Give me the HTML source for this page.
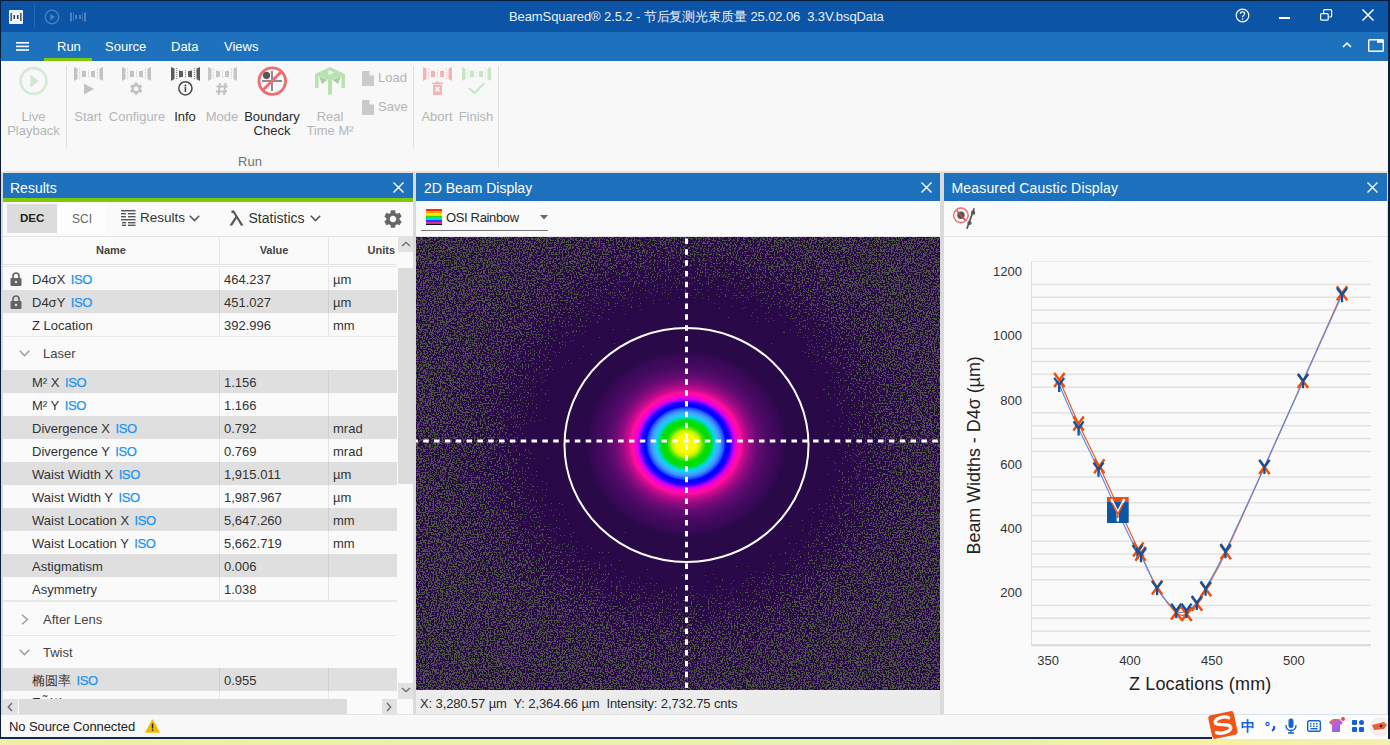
<!DOCTYPE html>
<html><head><meta charset="utf-8">
<style>
*{margin:0;padding:0;box-sizing:border-box}
html,body{width:1390px;height:745px;overflow:hidden;background:#f9f9f9;font-family:"Liberation Sans",sans-serif;position:relative}
.a{position:absolute}
.t{position:absolute;white-space:nowrap;line-height:1}
svg{position:absolute;overflow:visible}
</style></head><body>
<!-- window frame -->
<div class="a" style="left:0;top:0;width:1390px;height:745px;background:#f9f9f9"></div>
<!-- title bar -->
<div class="a" id="titlebar" style="left:0;top:0;width:1390px;height:32px;background:#0c55a6"></div>
<!-- menu bar -->
<div class="a" id="menubar" style="left:0;top:32px;width:1390px;height:29px;background:#1e72bd"></div>
<!-- ribbon -->
<div class="a" id="ribbon" style="left:0;top:61px;width:1390px;height:110px;background:#f8f8f8"></div>
<div class="a" style="left:0;top:171px;width:1390px;height:2px;background:#e6e2de"></div>

<!-- panels area bg -->
<div class="a" style="left:0;top:173px;width:1390px;height:541px;background:#dadada"></div>


<!-- title content -->
<div class="a" style="left:9px;top:10px;width:14px;height:14px;background:#eef4fa;border-radius:1px"></div>
<svg style="left:9px;top:10px" width="14" height="14" viewBox="0 0 14 14">
<rect x="1.5" y="3" width="1.3" height="8" fill="#2a3a50"/>
<rect x="4.5" y="5" width="1.5" height="4" fill="#2a3a50"/>
<rect x="8" y="5" width="1.5" height="4" fill="#2a3a50"/>
<rect x="11.2" y="3" width="1.3" height="8" fill="#2a3a50"/>
</svg>
<div class="a" style="left:34px;top:4px;width:1px;height:24px;background:#2a6ab2"></div>
<svg style="left:44px;top:9px" width="16" height="16" viewBox="0 0 16 16">
<circle cx="8" cy="8" r="6.8" fill="none" stroke="#4a82c0" stroke-width="1.3"/>
<path d="M6.3 4.8 L11 8 L6.3 11.2 Z" fill="#4a82c0"/>
</svg>
<svg style="left:70px;top:11px" width="16" height="12" viewBox="0 0 16 12">
<g fill="#4a82c0"><path d="M0 1 L2 2 L2 10 L0 11Z"/><path d="M14 2 L16 1 L16 11 L14 10Z"/><rect x="5" y="4" width="2" height="4"/><rect x="9" y="4" width="2" height="4"/><rect x="3.3" y="2" width="0.7" height="8"/><rect x="12" y="2" width="0.7" height="8"/></g>
</svg>
<div class="t" style="left:509px;top:10px;font-size:13px;color:#e8f0f8;letter-spacing:-0.1px">BeamSquared® 2.5.2 - 节后复测光束质量 25.02.06&nbsp; 3.3V.bsqData</div>
<!-- help -->
<svg style="left:1235px;top:8px" width="15" height="15" viewBox="0 0 15 15">
<circle cx="7.5" cy="7.5" r="6.3" fill="none" stroke="#fff" stroke-width="1.2"/>
<path d="M5.3 5.8 C5.3 3.2 9.7 3.2 9.7 5.8 C9.7 7.4 7.5 7.4 7.5 9.2" fill="none" stroke="#fff" stroke-width="1.2"/>
<circle cx="7.5" cy="11" r="0.8" fill="#fff"/>
</svg>
<div class="a" style="left:1279px;top:17px;width:11px;height:2px;background:#fff"></div>
<svg style="left:1320px;top:9px" width="13" height="12" viewBox="0 0 13 12">
<rect x="0.6" y="4.6" width="7.6" height="6.6" rx="1" fill="none" stroke="#fff" stroke-width="1.2"/>
<path d="M3.6 4.2 V1.6 A1 1 0 0 1 4.6 0.6 H10.6 A1 1 0 0 1 11.6 1.6 V7 A1 1 0 0 1 10.6 8 H8.6" fill="none" stroke="#fff" stroke-width="1.2"/>
</svg>
<svg style="left:1362px;top:9px" width="12" height="12" viewBox="0 0 12 12">
<path d="M0.5 0.5 L11.5 11.5 M11.5 0.5 L0.5 11.5" stroke="#fff" stroke-width="1.5"/>
</svg>
<!-- menu content -->
<svg style="left:16px;top:42px" width="13" height="9" viewBox="0 0 13 9">
<rect x="0" y="0" width="13" height="1.6" fill="#fff"/><rect x="0" y="3.6" width="13" height="1.6" fill="#fff"/><rect x="0" y="7.2" width="13" height="1.6" fill="#fff"/>
</svg>
<div class="t" style="left:57px;top:40px;font-size:13px;color:#fff">Run</div>
<div class="t" style="left:105px;top:40px;font-size:13px;color:#fff">Source</div>
<div class="t" style="left:171px;top:40px;font-size:13px;color:#fff">Data</div>
<div class="t" style="left:224px;top:40px;font-size:13px;color:#fff">Views</div>
<div class="a" style="left:44px;top:57.5px;width:48px;height:3.5px;background:#80c90a"></div>
<svg style="left:1342px;top:42px" width="10" height="6" viewBox="0 0 10 6">
<path d="M1 5 L5 1.2 L9 5" fill="none" stroke="#fff" stroke-width="1.6"/>
</svg>
<svg style="left:1368px;top:39px" width="16" height="13" viewBox="0 0 16 13">
<rect x="0.7" y="0.7" width="14.6" height="11.6" rx="1" fill="none" stroke="#fff" stroke-width="1.4"/>
<rect x="9" y="0.7" width="6.3" height="3" fill="#fff"/>
</svg>


<!-- ribbon content -->
<svg width="0" height="0" style="position:absolute">
<defs>
<g id="bm">
<path d="M0 0 L3.5 1.5 L3.5 12 L0 14 Z"/>
<path d="M5.3 1 h0.9 v1 h-0.9z M5.3 3 h0.9 v1 h-0.9z M5.3 5 h0.9 v1 h-0.9z M5.3 7 h0.9 v1 h-0.9z M5.3 9 h0.9 v1 h-0.9z M5.3 11 h0.9 v1 h-0.9z"/>
<path d="M8 3.5 L12 4.3 L12 9.7 L8 10.5 Z"/>
<path d="M14 3.3 h0.9 v1 h-0.9z M14 5.3 h0.9 v1 h-0.9z M14 7.3 h0.9 v1 h-0.9z M14 9.3 h0.9 v1 h-0.9z"/>
<path d="M21 3.5 L17 4.3 L17 9.7 L21 10.5 Z"/>
<path d="M22.8 1 h0.9 v1 h-0.9z M22.8 3 h0.9 v1 h-0.9z M22.8 5 h0.9 v1 h-0.9z M22.8 7 h0.9 v1 h-0.9z M22.8 9 h0.9 v1 h-0.9z M22.8 11 h0.9 v1 h-0.9z"/>
<path d="M29 0 L25.5 1.5 L25.5 12 L29 14 Z"/>
</g>
</defs>
</svg>
<!-- Live Playback -->
<svg style="left:19px;top:66px" width="30" height="30" viewBox="0 0 30 30">
<circle cx="14.5" cy="15" r="12.9" fill="none" stroke="#d3ebd3" stroke-width="2.7"/>
<path d="M11.4 8.8 L19.8 15 L11.4 21.5 Z" fill="#cfe8cf"/>
</svg>
<div class="t" style="left:0;width:67px;text-align:center;top:110px;font-size:13px;color:#b5b5b5">Live</div>
<div class="t" style="left:0;width:67px;text-align:center;top:124px;font-size:13px;color:#b5b5b5">Playback</div>
<div class="a" style="left:66px;top:66px;width:1px;height:82px;background:#dedede"></div>
<!-- Start -->
<svg style="left:74px;top:67px" width="30" height="30" viewBox="0 0 30 30"><use href="#bm" fill="#c2c2c2"/>
<path d="M10 16.5 L20 22 L10 27.5 Z" fill="#c2c2c2"/></svg>
<div class="t" style="left:58px;width:60px;text-align:center;top:110px;font-size:13px;color:#b5b5b5">Start</div>
<!-- Configure -->
<svg style="left:122px;top:67px" width="30" height="30" viewBox="0 0 30 30"><use href="#bm" fill="#c2c2c2"/>
<g transform="translate(6.5,14) scale(0.64)"><path fill="#c2c2c2" d="M19.14 12.94c.04-.3.06-.61.06-.94 0-.32-.02-.64-.07-.94l2.03-1.58c.18-.14.23-.41.12-.61l-1.92-3.32c-.12-.22-.37-.29-.59-.22l-2.39.96c-.5-.38-1.03-.7-1.62-.94l-.36-2.54c-.04-.24-.24-.41-.48-.41h-3.840c-.24 0-.43.17-.47.41l-.36 2.54c-.59.24-1.130.57-1.62.94l-2.39-.96c-.22-.08-.47 0-.59.22L2.74 8.87c-.12.21-.08.47.12.61l2.03 1.58c-.05.3-.09.63-.09.94s.02.64.07.94l-2.03 1.58c-.18.14-.23.41-.12.61l1.920 3.32c.12.22.37.29.59.22l2.39-.96c.5.38 1.03.7 1.62.94l.36 2.54c.05.24.24.41.48.41h3.84c.24 0 .44-.17.47-.41l.36-2.54c.59-.24 1.13-.56 1.62-.94l2.39.96c.22.08.47 0 .59-.22l1.92-3.32c.12-.22.07-.47-.12-.61l-2.01-1.58zM12 15.6c-1.98 0-3.6-1.620-3.6-3.6s1.62-3.6 3.6-3.6 3.6 1.62 3.6 3.6-1.62 3.6-3.6 3.6z"/></g></svg>
<div class="t" style="left:106px;width:62px;text-align:center;top:110px;font-size:13px;color:#b5b5b5">Configure</div>
<!-- Info -->
<svg style="left:171px;top:67px" width="30" height="30" viewBox="0 0 30 30"><use href="#bm" fill="#5a5a5a"/>
<circle cx="14.4" cy="21.3" r="6.6" fill="none" stroke="#4a4a4a" stroke-width="1.5"/>
<circle cx="14.4" cy="18.5" r="1" fill="#4a4a4a"/><rect x="13.6" y="20" width="1.6" height="5" fill="#4a4a4a"/></svg>
<div class="t" style="left:155px;width:60px;text-align:center;top:110px;font-size:13px;color:#2a2a2a">Info</div>
<!-- Mode -->
<svg style="left:208px;top:67px" width="30" height="30" viewBox="0 0 30 30"><use href="#bm" fill="#c6c6c6"/>
<path d="M12 16 L10.5 28 M17.5 16 L16 28 M8.5 19.5 H19.5 M8 24.5 H19" stroke="#c2c2c2" stroke-width="2"/></svg>
<div class="t" style="left:192px;width:60px;text-align:center;top:110px;font-size:13px;color:#b5b5b5">Mode</div>
<!-- Boundary Check -->
<svg style="left:256px;top:65px" width="32" height="32" viewBox="0 0 32 32">
<path d="M6 16 H26 M16 6 V26" stroke="#6a6a6a" stroke-width="1.5"/>
<circle cx="10.5" cy="10.3" r="3.6" fill="#555"/>
<path d="M25.5 6.5 L6.8 25.2" stroke="#ef6b70" stroke-width="3"/>
<circle cx="16.3" cy="16.1" r="13.3" fill="none" stroke="#ef6b70" stroke-width="2.8"/>
</svg>
<div class="t" style="left:232px;width:80px;text-align:center;top:110px;font-size:13px;color:#2a2a2a">Boundary</div>
<div class="t" style="left:232px;width:80px;text-align:center;top:124px;font-size:13px;color:#2a2a2a">Check</div>
<!-- Real Time M2 -->
<svg style="left:315px;top:67px" width="30" height="28" viewBox="0 0 30 28">
<g fill="#b9e2b1">
<path d="M0 7 L15 0 L30 7 L30 21 L26.5 21 L26.5 9 L17 12.5 L17 27.5 L13 27.5 L13 12.5 L3.5 9 L3.5 21 L0 21 Z"/>
</g>
<path d="M4 9.5 L12.5 12.8 L7 17 Z M26 9.5 L17.5 12.8 L23 17 Z" fill="#a9cfa3"/>
<path d="M13.5 3 L19 5.5 L13.5 8 Z" fill="#eef7ec"/>
</svg>
<div class="t" style="left:300px;width:60px;text-align:center;top:110px;font-size:13px;color:#b5b5b5">Real</div>
<div class="t" style="left:295px;width:70px;text-align:center;top:124px;font-size:13px;color:#b5b5b5">Time M²</div>
<!-- Load / Save -->
<svg style="left:362px;top:71px" width="12" height="15" viewBox="0 0 12 15"><path d="M1 0 H7.5 L12 4.5 V14 A1 1 0 0 1 11 15 H1 A1 1 0 0 1 0 14 V1 A1 1 0 0 1 1 0Z" fill="#cacaca"/><path d="M7.5 0 V4.5 H12" fill="#f8f8f8"/></svg>
<div class="t" style="left:378px;top:71px;font-size:13px;color:#b5b5b5">Load</div>
<svg style="left:362px;top:100px" width="12" height="15" viewBox="0 0 12 15"><path d="M1 0 H7.5 L12 4.5 V14 A1 1 0 0 1 11 15 H1 A1 1 0 0 1 0 14 V1 A1 1 0 0 1 1 0Z" fill="#cacaca"/><path d="M7.5 0 V4.5 H12" fill="#f8f8f8"/></svg>
<div class="t" style="left:378px;top:100px;font-size:13px;color:#b5b5b5">Save</div>
<div class="a" style="left:413px;top:66px;width:1px;height:82px;background:#dedede"></div>
<!-- Abort -->
<svg style="left:423px;top:67px" width="30" height="30" viewBox="0 0 30 30"><use href="#bm" fill="#f4b4b6"/>
<path d="M9 15.5 H20 V17 H9Z M13 14.5 H16 V15.5 H13Z" fill="#f4b4b6"/><path d="M10 17.5 H19 V27 A1 1 0 0 1 18 28 H11 A1 1 0 0 1 10 27Z" fill="#f4b4b6"/>
<path d="M12.5 20 L16.5 24.5 M16.5 20 L12.5 24.5" stroke="#fff" stroke-width="1.3"/></svg>
<div class="t" style="left:407px;width:60px;text-align:center;top:110px;font-size:13px;color:#b5b5b5">Abort</div>
<!-- Finish -->
<svg style="left:462px;top:67px" width="30" height="30" viewBox="0 0 30 30"><use href="#bm" fill="#c8e6c4"/>
<path d="M7 21 L12.5 26 L22.5 16" fill="none" stroke="#c8e6c4" stroke-width="2.2"/></svg>
<div class="t" style="left:446px;width:60px;text-align:center;top:110px;font-size:13px;color:#b5b5b5">Finish</div>
<div class="a" style="left:498px;top:66px;width:1px;height:101px;background:#dedede"></div>
<div class="t" style="left:220px;width:60px;text-align:center;top:155px;font-size:13px;color:#707070">Run</div>

<!-- Results panel -->
<div class="a" id="results" style="left:3px;top:173px;width:410px;height:541px;background:#fafafa"></div>

<!-- Results panel content -->
<div class="a" style="left:3px;top:173px;width:410px;height:25px;background:#1e72bd"></div>
<div class="a" style="left:3px;top:198px;width:410px;height:4px;background:#80c90a"></div>
<div class="t" style="left:10px;top:181px;font-size:14px;color:#fff">Results</div>
<svg style="left:393px;top:182px" width="11" height="11" viewBox="0 0 11 11"><path d="M0.5 0.5 L10.5 10.5 M10.5 0.5 L0.5 10.5" stroke="#fff" stroke-width="1.4"/></svg>
<!-- toolbar -->
<div class="a" style="left:7px;top:204px;width:50px;height:29px;background:#dcdcdc"></div>
<div class="a" style="left:57px;top:204px;width:49px;height:29px;background:#fdfdfd"></div>
<div class="t" style="left:20px;top:213px;font-size:11.5px;font-weight:bold;color:#222">DEC</div>
<div class="t" style="left:72px;top:213px;font-size:12px;color:#666">SCI</div>
<svg style="left:121px;top:210px" width="15" height="16" viewBox="0 0 15 16"><g fill="#555">
<rect x="0" y="0" width="14.5" height="1.4"/>
<rect x="0" y="3" width="5" height="1.4"/><rect x="7" y="3" width="7.5" height="1.4"/>
<rect x="0" y="6" width="5" height="1.4"/><rect x="7" y="6" width="7.5" height="1.4"/>
<rect x="0" y="9" width="14.5" height="1.4"/>
<rect x="1" y="12" width="4" height="1.4"/><rect x="7" y="12" width="7.5" height="1.4"/>
<rect x="1" y="14.6" width="4" height="1.4"/><rect x="7" y="14.6" width="7.5" height="1.4"/>
</g></svg>
<div class="t" style="left:140px;top:211px;font-size:13.5px;color:#333">Results</div>
<svg style="left:189px;top:215px" width="11" height="7" viewBox="0 0 11 7"><path d="M0.8 0.8 L5.5 5.6 L10.2 0.8" fill="none" stroke="#555" stroke-width="1.5"/></svg>
<svg style="left:229px;top:210px" width="15" height="16" viewBox="0 0 15 16"><path d="M2.5 0.6 L5 0.6 L14.5 15.5 L11.8 15.5 L7.8 8.6 L3.2 15.5 L0.5 15.5 L6.4 6.6 L4.2 3 L2.5 3 Z" fill="#555"/></svg>
<div class="t" style="left:248.5px;top:211px;font-size:14px;color:#333">Statistics</div>
<svg style="left:310px;top:215px" width="11" height="7" viewBox="0 0 11 7"><path d="M0.8 0.8 L5.5 5.6 L10.2 0.8" fill="none" stroke="#555" stroke-width="1.5"/></svg>
<svg style="left:382px;top:208px" width="22" height="22" viewBox="0 0 24 24"><path fill="#666" d="M19.14 12.94c.04-.3.06-.61.06-.94 0-.32-.02-.64-.07-.94l2.03-1.58c.18-.14.23-.41.12-.61l-1.92-3.32c-.12-.22-.37-.29-.59-.22l-2.39.96c-.5-.38-1.03-.7-1.62-.94l-.36-2.54c-.04-.24-.24-.41-.48-.41h-3.84c-.24 0-.43.17-.47.41l-.36 2.54c-.59.24-1.13.57-1.62.94l-2.39-.96c-.22-.08-.47 0-.59.22L2.74 8.87c-.12.21-.08.47.12.61l2.03 1.58c-.05.3-.09.63-.09.94s.02.64.07.94l-2.03 1.58c-.18.14-.23.41-.12.61l1.92 3.32c.12.22.37.29.59.22l2.39-.96c.5.38 1.03.7 1.62.94l.36 2.54c.05.24.24.41.48.41h3.84c.24 0 .44-.17.47-.41l.36-2.54c.59-.24 1.13-.56 1.62-.94l2.39.96c.22.08.47 0 .59-.22l1.92-3.32c.12-.22.07-.47-.12-.61l-2.01-1.58zM12 15.6c-1.98 0-3.6-1.62-3.6-3.6s1.62-3.6 3.6-3.6 3.6 1.62 3.6 3.6-1.62 3.6-3.6 3.6z"/></svg>
<div class="a" style="left:3px;top:236px;width:410px;height:1px;background:#e2e2e2"></div>
<!-- table header -->
<div class="a" style="left:219px;top:237px;width:1px;height:27px;background:#e6e6e6"></div>
<div class="a" style="left:328px;top:237px;width:1px;height:27px;background:#e6e6e6"></div>
<div class="t" style="left:3px;width:216px;text-align:center;top:245px;font-size:11px;font-weight:bold;color:#444">Name</div>
<div class="t" style="left:220px;width:108px;text-align:center;top:245px;font-size:11px;font-weight:bold;color:#444">Value</div>
<div class="t" style="left:329px;width:66px;text-align:right;top:245px;font-size:11px;font-weight:bold;color:#444">Units</div>
<div class="a" style="left:3px;top:264px;width:394px;height:1px;background:#e2e2e2"></div>
<div class="a" style="left:3px;top:266px;width:394px;height:1px;background:#e8e8e8"></div>
<!-- scrollbar -->
<div class="a" style="left:398px;top:237px;width:15px;height:15px;background:#e2e2e2"></div>
<svg style="left:401px;top:241px" width="10" height="6" viewBox="0 0 10 6"><path d="M1 5 L5 1.3 L9 5" fill="none" stroke="#666" stroke-width="1.3"/></svg>
<div class="a" style="left:398px;top:268px;width:15px;height:216px;background:#dcdcdc"></div>
<div class="a" style="left:398px;top:683px;width:15px;height:16px;background:#e2e2e2"></div>
<svg style="left:401px;top:687px" width="10" height="6" viewBox="0 0 10 6"><path d="M1 1 L5 4.7 L9 1" fill="none" stroke="#666" stroke-width="1.3"/></svg>
<div class="a" style="left:3px;top:267px;width:394px;height:23px;background:#fafafa"></div>
<div class="a" style="left:219px;top:267px;width:1px;height:23px;background:#e6e6e6"></div>
<div class="a" style="left:328px;top:267px;width:1px;height:23px;background:#e6e6e6"></div>
<svg style="left:10px;top:272px" width="12" height="14" viewBox="0 0 12 14"><path d="M3 6 V4 A3 3 0 0 1 9 4 V6" fill="none" stroke="#646464" stroke-width="1.7"/><rect x="0.5" y="6" width="11" height="8" rx="1" fill="#646464"/><circle cx="6" cy="10" r="1.2" fill="#e8e8e8"/></svg>
<div class="t" style="left:32px;top:273px;font-size:13px;color:#333">D4σX<span style="margin-left:5.5px;color:#2196f0;-webkit-text-stroke:0.25px #2196f0;letter-spacing:-0.4px">ISO</span></div>
<div class="t" style="left:224px;top:273px;font-size:13px;color:#333">464.237</div>
<div class="t" style="left:333px;top:273px;font-size:13px;color:#333">µm</div>
<div class="a" style="left:3px;top:290px;width:394px;height:23px;background:#dfdfdf"></div>
<div class="a" style="left:219px;top:290px;width:1px;height:23px;background:#cfcfcf"></div>
<div class="a" style="left:328px;top:290px;width:1px;height:23px;background:#cfcfcf"></div>
<svg style="left:10px;top:295px" width="12" height="14" viewBox="0 0 12 14"><path d="M3 6 V4 A3 3 0 0 1 9 4 V6" fill="none" stroke="#646464" stroke-width="1.7"/><rect x="0.5" y="6" width="11" height="8" rx="1" fill="#646464"/><circle cx="6" cy="10" r="1.2" fill="#e8e8e8"/></svg>
<div class="t" style="left:32px;top:296px;font-size:13px;color:#333">D4σY<span style="margin-left:5.5px;color:#2196f0;-webkit-text-stroke:0.25px #2196f0;letter-spacing:-0.4px">ISO</span></div>
<div class="t" style="left:224px;top:296px;font-size:13px;color:#333">451.027</div>
<div class="t" style="left:333px;top:296px;font-size:13px;color:#333">µm</div>
<div class="a" style="left:3px;top:313px;width:394px;height:23px;background:#fafafa"></div>
<div class="a" style="left:219px;top:313px;width:1px;height:23px;background:#e6e6e6"></div>
<div class="a" style="left:328px;top:313px;width:1px;height:23px;background:#e6e6e6"></div>
<div class="t" style="left:32px;top:319px;font-size:13px;color:#333">Z Location</div>
<div class="t" style="left:224px;top:319px;font-size:13px;color:#333">392.996</div>
<div class="t" style="left:333px;top:319px;font-size:13px;color:#333">mm</div>
<div class="a" style="left:3px;top:336px;width:394px;height:1px;background:#e8e8e8"></div>
<svg style="left:19px;top:350px" width="11" height="7" viewBox="0 0 11 7"><path d="M0.8 0.8 L5.5 5.8 L10.2 0.8" fill="none" stroke="#999" stroke-width="1.4"/></svg>
<div class="t" style="left:43px;top:347px;font-size:13px;color:#444">Laser</div>
<div class="a" style="left:3px;top:370px;width:394px;height:23px;background:#dfdfdf"></div>
<div class="a" style="left:219px;top:370px;width:1px;height:23px;background:#cfcfcf"></div>
<div class="a" style="left:328px;top:370px;width:1px;height:23px;background:#cfcfcf"></div>
<div class="t" style="left:32px;top:376px;font-size:13px;color:#333">M² X<span style="margin-left:5.5px;color:#2196f0;-webkit-text-stroke:0.25px #2196f0;letter-spacing:-0.4px">ISO</span></div>
<div class="t" style="left:224px;top:376px;font-size:13px;color:#333">1.156</div>
<div class="a" style="left:3px;top:393px;width:394px;height:23px;background:#fafafa"></div>
<div class="a" style="left:219px;top:393px;width:1px;height:23px;background:#e6e6e6"></div>
<div class="a" style="left:328px;top:393px;width:1px;height:23px;background:#e6e6e6"></div>
<div class="t" style="left:32px;top:399px;font-size:13px;color:#333">M² Y<span style="margin-left:5.5px;color:#2196f0;-webkit-text-stroke:0.25px #2196f0;letter-spacing:-0.4px">ISO</span></div>
<div class="t" style="left:224px;top:399px;font-size:13px;color:#333">1.166</div>
<div class="a" style="left:3px;top:416px;width:394px;height:23px;background:#dfdfdf"></div>
<div class="a" style="left:219px;top:416px;width:1px;height:23px;background:#cfcfcf"></div>
<div class="a" style="left:328px;top:416px;width:1px;height:23px;background:#cfcfcf"></div>
<div class="t" style="left:32px;top:422px;font-size:13px;color:#333">Divergence X<span style="margin-left:5.5px;color:#2196f0;-webkit-text-stroke:0.25px #2196f0;letter-spacing:-0.4px">ISO</span></div>
<div class="t" style="left:224px;top:422px;font-size:13px;color:#333">0.792</div>
<div class="t" style="left:333px;top:422px;font-size:13px;color:#333">mrad</div>
<div class="a" style="left:3px;top:439px;width:394px;height:23px;background:#fafafa"></div>
<div class="a" style="left:219px;top:439px;width:1px;height:23px;background:#e6e6e6"></div>
<div class="a" style="left:328px;top:439px;width:1px;height:23px;background:#e6e6e6"></div>
<div class="t" style="left:32px;top:445px;font-size:13px;color:#333">Divergence Y<span style="margin-left:5.5px;color:#2196f0;-webkit-text-stroke:0.25px #2196f0;letter-spacing:-0.4px">ISO</span></div>
<div class="t" style="left:224px;top:445px;font-size:13px;color:#333">0.769</div>
<div class="t" style="left:333px;top:445px;font-size:13px;color:#333">mrad</div>
<div class="a" style="left:3px;top:462px;width:394px;height:23px;background:#dfdfdf"></div>
<div class="a" style="left:219px;top:462px;width:1px;height:23px;background:#cfcfcf"></div>
<div class="a" style="left:328px;top:462px;width:1px;height:23px;background:#cfcfcf"></div>
<div class="t" style="left:32px;top:468px;font-size:13px;color:#333">Waist Width X<span style="margin-left:5.5px;color:#2196f0;-webkit-text-stroke:0.25px #2196f0;letter-spacing:-0.4px">ISO</span></div>
<div class="t" style="left:224px;top:468px;font-size:13px;color:#333">1,915.011</div>
<div class="t" style="left:333px;top:468px;font-size:13px;color:#333">µm</div>
<div class="a" style="left:3px;top:485px;width:394px;height:23px;background:#fafafa"></div>
<div class="a" style="left:219px;top:485px;width:1px;height:23px;background:#e6e6e6"></div>
<div class="a" style="left:328px;top:485px;width:1px;height:23px;background:#e6e6e6"></div>
<div class="t" style="left:32px;top:491px;font-size:13px;color:#333">Waist Width Y<span style="margin-left:5.5px;color:#2196f0;-webkit-text-stroke:0.25px #2196f0;letter-spacing:-0.4px">ISO</span></div>
<div class="t" style="left:224px;top:491px;font-size:13px;color:#333">1,987.967</div>
<div class="t" style="left:333px;top:491px;font-size:13px;color:#333">µm</div>
<div class="a" style="left:3px;top:508px;width:394px;height:23px;background:#dfdfdf"></div>
<div class="a" style="left:219px;top:508px;width:1px;height:23px;background:#cfcfcf"></div>
<div class="a" style="left:328px;top:508px;width:1px;height:23px;background:#cfcfcf"></div>
<div class="t" style="left:32px;top:514px;font-size:13px;color:#333">Waist Location X<span style="margin-left:5.5px;color:#2196f0;-webkit-text-stroke:0.25px #2196f0;letter-spacing:-0.4px">ISO</span></div>
<div class="t" style="left:224px;top:514px;font-size:13px;color:#333">5,647.260</div>
<div class="t" style="left:333px;top:514px;font-size:13px;color:#333">mm</div>
<div class="a" style="left:3px;top:531px;width:394px;height:23px;background:#fafafa"></div>
<div class="a" style="left:219px;top:531px;width:1px;height:23px;background:#e6e6e6"></div>
<div class="a" style="left:328px;top:531px;width:1px;height:23px;background:#e6e6e6"></div>
<div class="t" style="left:32px;top:537px;font-size:13px;color:#333">Waist Location Y<span style="margin-left:5.5px;color:#2196f0;-webkit-text-stroke:0.25px #2196f0;letter-spacing:-0.4px">ISO</span></div>
<div class="t" style="left:224px;top:537px;font-size:13px;color:#333">5,662.719</div>
<div class="t" style="left:333px;top:537px;font-size:13px;color:#333">mm</div>
<div class="a" style="left:3px;top:554px;width:394px;height:23px;background:#dfdfdf"></div>
<div class="a" style="left:219px;top:554px;width:1px;height:23px;background:#cfcfcf"></div>
<div class="a" style="left:328px;top:554px;width:1px;height:23px;background:#cfcfcf"></div>
<div class="t" style="left:32px;top:560px;font-size:13px;color:#333">Astigmatism</div>
<div class="t" style="left:224px;top:560px;font-size:13px;color:#333">0.006</div>
<div class="a" style="left:3px;top:577px;width:394px;height:23px;background:#fafafa"></div>
<div class="a" style="left:219px;top:577px;width:1px;height:23px;background:#e6e6e6"></div>
<div class="a" style="left:328px;top:577px;width:1px;height:23px;background:#e6e6e6"></div>
<div class="t" style="left:32px;top:583px;font-size:13px;color:#333">Asymmetry</div>
<div class="t" style="left:224px;top:583px;font-size:13px;color:#333">1.038</div>
<div class="a" style="left:3px;top:600px;width:394px;height:2px;background:#e8e8e8"></div>
<svg style="left:21px;top:614px" width="8" height="11" viewBox="0 0 8 11"><path d="M1 0.8 L6.5 5.5 L1 10.2" fill="none" stroke="#999" stroke-width="1.4"/></svg>
<div class="t" style="left:43px;top:613px;font-size:13px;color:#444">After Lens</div>
<div class="a" style="left:3px;top:635px;width:394px;height:1px;background:#e8e8e8"></div>
<svg style="left:19px;top:649px" width="11" height="7" viewBox="0 0 11 7"><path d="M0.8 0.8 L5.5 5.8 L10.2 0.8" fill="none" stroke="#999" stroke-width="1.4"/></svg>
<div class="t" style="left:43px;top:646px;font-size:13px;color:#444">Twist</div>
<div class="a" style="left:3px;top:668px;width:394px;height:23px;background:#dfdfdf"></div>
<div class="a" style="left:219px;top:668px;width:1px;height:23px;background:#cfcfcf"></div>
<div class="a" style="left:328px;top:668px;width:1px;height:23px;background:#cfcfcf"></div>
<div class="t" style="left:32px;top:674px;font-size:13px;color:#333">椭圆率<span style="margin-left:5.5px;color:#2196f0;-webkit-text-stroke:0.25px #2196f0;letter-spacing:-0.4px">ISO</span></div>
<div class="t" style="left:224px;top:674px;font-size:13px;color:#333">0.955</div>
<div class="a" style="left:3px;top:691px;width:394px;height:8px;background:#fafafa;overflow:hidden"><div class="t" style="left:29px;top:5px;font-size:13px;color:#333">Ew̃l^iw</div></div>
<div class="a" style="left:219px;top:691px;width:1px;height:8px;background:#e6e6e6"></div>
<div class="a" style="left:328px;top:691px;width:1px;height:8px;background:#e6e6e6"></div>
<!-- h scrollbar -->
<div class="a" style="left:3px;top:699px;width:394px;height:15px;background:#fafafa"></div>
<div class="a" style="left:3px;top:699px;width:15px;height:15px;background:#e2e2e2"></div>
<svg style="left:7px;top:702px" width="6" height="10" viewBox="0 0 6 10"><path d="M5 1 L1.3 5 L5 9" fill="none" stroke="#666" stroke-width="1.3"/></svg>
<div class="a" style="left:19px;top:699px;width:328px;height:15px;background:#dcdcdc"></div>
<div class="a" style="left:382px;top:699px;width:15px;height:15px;background:#e2e2e2"></div>
<svg style="left:386px;top:702px" width="6" height="10" viewBox="0 0 6 10"><path d="M1 1 L4.7 5 L1 9" fill="none" stroke="#666" stroke-width="1.3"/></svg>

<!-- 2D panel -->
<div class="a" id="beam" style="left:416px;top:173px;width:524px;height:541px;background:#fafafa"></div>

<!-- 2D panel content -->
<div class="a" style="left:416px;top:173px;width:524px;height:28px;background:#1e72bd"></div>
<div class="t" style="left:424px;top:181px;font-size:14px;color:#fff">2D Beam Display</div>
<svg style="left:921px;top:182px" width="11" height="11" viewBox="0 0 11 11"><path d="M0.5 0.5 L10.5 10.5 M10.5 0.5 L0.5 10.5" stroke="#fff" stroke-width="1.4"/></svg>
<svg style="left:426px;top:209px" width="16" height="16" viewBox="0 0 16 16">
<rect x="0" y="0" width="16" height="2.3" fill="#ff2a00"/>
<rect x="0" y="2.3" width="16" height="2.2" fill="#ff9a00"/>
<rect x="0" y="4.5" width="16" height="2.2" fill="#ffee00"/>
<rect x="0" y="6.7" width="16" height="2.2" fill="#22dd00"/>
<rect x="0" y="8.9" width="16" height="2.1" fill="#00d8e8"/>
<rect x="0" y="11" width="16" height="2.1" fill="#2040ff"/>
<rect x="0" y="13.1" width="16" height="1.6" fill="#e0208a"/>
<rect x="0" y="14.7" width="16" height="1.3" fill="#111"/>
</svg>
<div class="t" style="left:446px;top:211px;font-size:13px;color:#2a2a2a;letter-spacing:-0.35px">OSI Rainbow</div>
<svg style="left:540px;top:215px" width="8" height="5" viewBox="0 0 8 5"><path d="M0 0 H8 L4 4.5Z" fill="#666"/></svg>
<div class="a" style="left:421px;top:230px;width:127px;height:1px;background:#7a7a7a"></div>
<div class="a" style="left:416px;top:236px;width:524px;height:1px;background:#e4e4e4"></div>
<!-- beam image -->
<svg style="left:416px;top:237px" width="524" height="453" viewBox="0 0 524 453">
<defs>
<filter id="nz" x="0" y="0" width="524" height="453" filterUnits="userSpaceOnUse" color-interpolation-filters="sRGB">
<feTurbulence type="fractalNoise" baseFrequency="0.65" numOctaves="1" seed="3" result="t"/>
<feColorMatrix in="t" type="matrix" values="1 0 0 0 0  0 1 0 0 0  0 0 1 0 0  0 0 0 0 1" result="t2"/>
<feComposite in="t2" in2="SourceGraphic" operator="arithmetic" k1="0" k2="1" k3="1" k4="-1" result="s"/>
<feColorMatrix in="s" type="matrix" values="0 0 0 0 0.30  0 0 0 0 0.318  0 0 0 0 0.275  1 0 0 0 0" result="c"/>
<feComponentTransfer in="c"><feFuncA type="discrete" tableValues="0 1"/></feComponentTransfer>
</filter>
<radialGradient id="nm" cx="270.5" cy="204" r="340" gradientUnits="userSpaceOnUse" gradientTransform="translate(270.5 204) scale(1 0.95) translate(-270.5 -204)">
<stop offset="0" stop-color="rgb(120,120,120)"/>
<stop offset="0.39" stop-color="rgb(182,182,182)"/>
<stop offset="0.5" stop-color="rgb(219,219,219)"/>
<stop offset="0.59" stop-color="rgb(241,241,241)"/>
<stop offset="0.68" stop-color="rgb(248,248,248)"/>
<stop offset="0.79" stop-color="rgb(252,252,252)"/>
<stop offset="1" stop-color="rgb(253,253,253)"/>
</radialGradient>
<radialGradient id="bg" cx="270" cy="206.5" r="100" gradientUnits="userSpaceOnUse" gradientTransform="translate(270 206.5) scale(1 0.93) translate(-270 -206.5)">
<stop offset="0" stop-color="#ffff00"/>
<stop offset="0.10" stop-color="#f8fc00"/>
<stop offset="0.14" stop-color="#c0f400"/>
<stop offset="0.17" stop-color="#50e400"/>
<stop offset="0.20" stop-color="#00e000"/>
<stop offset="0.25" stop-color="#00dc10"/>
<stop offset="0.275" stop-color="#00d8a0"/>
<stop offset="0.295" stop-color="#00d8ff"/>
<stop offset="0.32" stop-color="#40b0ff"/>
<stop offset="0.35" stop-color="#3a90ff"/>
<stop offset="0.38" stop-color="#1a50ff"/>
<stop offset="0.40" stop-color="#0000ff"/>
<stop offset="0.44" stop-color="#1800ff"/>
<stop offset="0.465" stop-color="#9000ff"/>
<stop offset="0.49" stop-color="#e000f0"/>
<stop offset="0.51" stop-color="#ff00c0"/>
<stop offset="0.54" stop-color="#ff10a0"/>
<stop offset="0.58" stop-color="#d00a90"/>
<stop offset="0.64" stop-color="#960a84"/>
<stop offset="0.72" stop-color="#660a74"/>
<stop offset="0.82" stop-color="#480a62"/>
<stop offset="0.95" stop-color="#360856"/>
<stop offset="1.3" stop-color="#2a0948"/>
</radialGradient>
<radialGradient id="bg2" cx="270.5" cy="204" r="130" gradientUnits="userSpaceOnUse">
<stop offset="0" stop-color="#3a0858" stop-opacity="0"/>
<stop offset="0.7" stop-color="#350a55" stop-opacity="1"/>
<stop offset="1" stop-color="#2d0a4a" stop-opacity="1"/>
</radialGradient>
</defs>
<rect width="524" height="453" fill="#2a0948"/>
<rect width="524" height="453" fill="url(#bg)"/>
<rect width="524" height="453" fill="url(#nm)" filter="url(#nz)"/>
<ellipse cx="270.5" cy="208" rx="122" ry="117" fill="none" stroke="#fff" stroke-width="2"/>
<path d="M270.5 0 V453" stroke="#fff" stroke-width="3" stroke-dasharray="5.5 5.33" stroke-dashoffset="9.3"/>
<path d="M0 204 H524" stroke="#fff" stroke-width="3" stroke-dasharray="5.5 5.33" stroke-dashoffset="3.6"/>
</svg>
<div class="a" style="left:416px;top:690px;width:524px;height:24px;background:#ececec"></div>
<div class="t" style="left:420px;top:697px;font-size:13px;color:#2a2a2a;letter-spacing:-0.12px">X: 3,280.57 µm&nbsp; Y: 2,364.66 µm&nbsp; Intensity: 2,732.75 cnts</div>

<!-- caustic panel -->
<div class="a" id="caustic" style="left:944px;top:173px;width:443px;height:541px;background:#fafafa"></div>


<!-- caustic panel content -->
<div class="a" style="left:944px;top:173px;width:443px;height:28px;background:#1e72bd"></div>
<div class="t" style="left:951.5px;top:181px;font-size:14px;color:#fff;letter-spacing:0.17px">Measured Caustic Display</div>
<svg style="left:1367px;top:182px" width="11" height="11" viewBox="0 0 11 11"><path d="M0.5 0.5 L10.5 10.5 M10.5 0.5 L0.5 10.5" stroke="#fff" stroke-width="1.4"/></svg>
<svg style="left:948px;top:202px" width="32" height="32" viewBox="0 0 32 32">
<circle cx="12.9" cy="13.3" r="3.7" fill="#555"/>
<path d="M8.6 8.6 L17.6 18.4" stroke="#e04050" stroke-width="1.5"/>
<circle cx="12.9" cy="13.3" r="7.3" fill="none" stroke="#ef6a70" stroke-width="1.4"/>
<path d="M26.2 6.4 L18.9 26.8" stroke="#555" stroke-width="1.7"/>
<circle cx="25.1" cy="10.7" r="2.1" fill="#555"/><circle cx="21.5" cy="21" r="2.1" fill="#555"/>
</svg>
<div class="a" style="left:944px;top:236px;width:443px;height:1px;background:#e4e4e4"></div>
<svg style="left:0;top:0" width="1390" height="745" viewBox="0 0 1390 745">
<rect x="1031" y="261" width="340" height="1" fill="#ececec"/>
<rect x="1031" y="630.37" width="340" height="1.5" fill="#e2e2e2"/>
<rect x="1031" y="617.53" width="340" height="1.5" fill="#e2e2e2"/>
<rect x="1031" y="604.69" width="340" height="1.5" fill="#e2e2e2"/>
<rect x="1031" y="579.01" width="340" height="1.5" fill="#e2e2e2"/>
<rect x="1031" y="566.17" width="340" height="1.5" fill="#e2e2e2"/>
<rect x="1031" y="553.33" width="340" height="1.5" fill="#e2e2e2"/>
<rect x="1031" y="540.49" width="340" height="1.5" fill="#e2e2e2"/>
<rect x="1031" y="514.81" width="340" height="1.5" fill="#e2e2e2"/>
<rect x="1031" y="501.97" width="340" height="1.5" fill="#e2e2e2"/>
<rect x="1031" y="489.13" width="340" height="1.5" fill="#e2e2e2"/>
<rect x="1031" y="476.29" width="340" height="1.5" fill="#e2e2e2"/>
<rect x="1031" y="450.61" width="340" height="1.5" fill="#e2e2e2"/>
<rect x="1031" y="437.77" width="340" height="1.5" fill="#e2e2e2"/>
<rect x="1031" y="424.93" width="340" height="1.5" fill="#e2e2e2"/>
<rect x="1031" y="412.09" width="340" height="1.5" fill="#e2e2e2"/>
<rect x="1031" y="386.41" width="340" height="1.5" fill="#e2e2e2"/>
<rect x="1031" y="373.57" width="340" height="1.5" fill="#e2e2e2"/>
<rect x="1031" y="360.73" width="340" height="1.5" fill="#e2e2e2"/>
<rect x="1031" y="347.89" width="340" height="1.5" fill="#e2e2e2"/>
<rect x="1031" y="322.21" width="340" height="1.5" fill="#e2e2e2"/>
<rect x="1031" y="309.37" width="340" height="1.5" fill="#e2e2e2"/>
<rect x="1031" y="296.53" width="340" height="1.5" fill="#e2e2e2"/>
<rect x="1031" y="283.69" width="340" height="1.5" fill="#e2e2e2"/>

<rect x="1031" y="261" width="1" height="384" fill="#dedede"/>
<rect x="1031" y="644" width="340" height="2.2" fill="#dcdcdc"/>
<path d="M1059.4 379.9 C1062.6 387.2 1071.9 409.2 1078.6 423.6 C1085.2 438.0 1092.8 452.6 1099.3 466.3 C1105.8 480.0 1111.3 492.1 1117.8 506.0 C1124.3 519.9 1134.5 541.5 1138.3 549.5 C1142.1 557.5 1137.4 547.4 1140.5 553.7 C1143.6 560.0 1151.1 577.7 1157.1 587.5 C1163.0 597.3 1171.3 608.1 1176.2 612.5 C1181.1 616.9 1183.1 615.5 1186.6 614.0 C1190.1 612.5 1193.8 607.8 1197.0 603.7 C1200.2 599.6 1201.2 597.8 1206.0 589.2 C1210.8 580.6 1216.1 572.6 1225.8 552.2 C1235.5 531.8 1251.5 495.4 1264.4 466.9 C1277.3 438.4 1290.1 409.9 1303.0 381.0 C1315.9 352.1 1335.5 307.9 1342.0 293.3" fill="none" stroke="#f05a24" stroke-width="1.2"/>
<path d="M1059.2 384.8 C1062.4 392.1 1072.0 414.3 1078.6 428.4 C1085.1 442.5 1092.0 455.6 1098.5 469.5 C1105.0 483.4 1111.3 498.2 1117.8 512.0 C1124.3 525.8 1133.6 544.8 1137.5 552.0 C1141.4 559.2 1137.7 549.0 1141.0 555.0 C1144.3 561.0 1151.2 578.8 1157.1 588.1 C1163.0 597.4 1171.3 606.9 1176.2 610.7 C1181.1 614.5 1183.1 612.0 1186.5 610.7 C1189.9 609.4 1193.6 606.5 1196.8 602.8 C1200.0 599.1 1200.8 597.1 1205.6 588.5 C1210.4 579.9 1215.7 571.3 1225.5 551.0 C1235.3 530.7 1251.5 495.2 1264.4 466.9 C1277.3 438.6 1290.1 409.6 1303.0 381.0 C1315.9 352.4 1335.5 309.3 1342.0 295.0" fill="none" stroke="#5d8ee6" stroke-width="1.2"/>

<path d="M1054.2 372.9 L1064.6 386.9 M1064.6 372.9 L1054.2 386.9" stroke="#f04e0c" stroke-width="2.5"/>
<path d="M1054.2 377.8 L1059.2 384.8 L1064.2 377.8 M1059.2 384.3 V392.0" fill="none" stroke="#0b52a0" stroke-width="2.3"/>
<path d="M1073.4 416.6 L1083.8 430.6 M1083.8 416.6 L1073.4 430.6" stroke="#f04e0c" stroke-width="2.5"/>
<path d="M1073.6 421.4 L1078.6 428.4 L1083.6 421.4 M1078.6 427.9 V435.6" fill="none" stroke="#0b52a0" stroke-width="2.3"/>
<path d="M1094.1 459.3 L1104.5 473.3 M1104.5 459.3 L1094.1 473.3" stroke="#f04e0c" stroke-width="2.5"/>
<path d="M1093.5 462.5 L1098.5 469.5 L1103.5 462.5 M1098.5 469.0 V476.7" fill="none" stroke="#0b52a0" stroke-width="2.3"/>
<path d="M1133.1 542.5 L1143.5 556.5 M1143.5 542.5 L1133.1 556.5" stroke="#f04e0c" stroke-width="2.5"/>
<path d="M1132.5 545.0 L1137.5 552.0 L1142.5 545.0 M1137.5 551.5 V559.2" fill="none" stroke="#0b52a0" stroke-width="2.3"/>
<path d="M1135.3 546.7 L1145.7 560.7 M1145.7 546.7 L1135.3 560.7" stroke="#f04e0c" stroke-width="2.5"/>
<path d="M1136.0 548.0 L1141.0 555.0 L1146.0 548.0 M1141.0 554.5 V562.2" fill="none" stroke="#0b52a0" stroke-width="2.3"/>
<path d="M1151.9 580.5 L1162.3 594.5 M1162.3 580.5 L1151.9 594.5" stroke="#f04e0c" stroke-width="2.5"/>
<path d="M1152.1 581.1 L1157.1 588.1 L1162.1 581.1 M1157.1 587.6 V595.3" fill="none" stroke="#0b52a0" stroke-width="2.3"/>
<path d="M1171.0 605.5 L1181.4 619.5 M1181.4 605.5 L1171.0 619.5" stroke="#f04e0c" stroke-width="2.5"/>
<path d="M1171.2 603.7 L1176.2 610.7 L1181.2 603.7 M1176.2 610.2 V617.9" fill="none" stroke="#0b52a0" stroke-width="2.3"/>
<path d="M1181.4 607.0 L1191.8 621.0 M1191.8 607.0 L1181.4 621.0" stroke="#f04e0c" stroke-width="2.5"/>
<path d="M1181.5 603.7 L1186.5 610.7 L1191.5 603.7 M1186.5 610.2 V617.9" fill="none" stroke="#0b52a0" stroke-width="2.3"/>
<path d="M1191.8 596.7 L1202.2 610.7 M1202.2 596.7 L1191.8 610.7" stroke="#f04e0c" stroke-width="2.5"/>
<path d="M1191.8 595.8 L1196.8 602.8 L1201.8 595.8 M1196.8 602.3 V610.0" fill="none" stroke="#0b52a0" stroke-width="2.3"/>
<path d="M1200.8 582.2 L1211.2 596.2 M1211.2 582.2 L1200.8 596.2" stroke="#f04e0c" stroke-width="2.5"/>
<path d="M1200.6 581.5 L1205.6 588.5 L1210.6 581.5 M1205.6 588.0 V595.7" fill="none" stroke="#0b52a0" stroke-width="2.3"/>
<path d="M1220.6 545.2 L1231.0 559.2 M1231.0 545.2 L1220.6 559.2" stroke="#f04e0c" stroke-width="2.5"/>
<path d="M1220.5 544.0 L1225.5 551.0 L1230.5 544.0 M1225.5 550.5 V558.2" fill="none" stroke="#0b52a0" stroke-width="2.3"/>
<path d="M1259.2 459.9 L1269.6 473.9 M1269.6 459.9 L1259.2 473.9" stroke="#f04e0c" stroke-width="2.5"/>
<path d="M1259.4 459.9 L1264.4 466.9 L1269.4 459.9 M1264.4 466.4 V474.1" fill="none" stroke="#0b52a0" stroke-width="2.3"/>
<path d="M1297.8 374.0 L1308.2 388.0 M1308.2 374.0 L1297.8 388.0" stroke="#f04e0c" stroke-width="2.5"/>
<path d="M1298.0 374.0 L1303.0 381.0 L1308.0 374.0 M1303.0 380.5 V388.2" fill="none" stroke="#0b52a0" stroke-width="2.3"/>
<path d="M1336.8 286.3 L1347.2 300.3 M1347.2 286.3 L1336.8 300.3" stroke="#f04e0c" stroke-width="2.5"/>
<path d="M1337.0 288.0 L1342.0 295.0 L1347.0 288.0 M1342.0 294.5 V302.2" fill="none" stroke="#0b52a0" stroke-width="2.3"/>
<rect x="1107" y="497" width="21.7" height="4.6" fill="#f04e0c"/>
<rect x="1107" y="501.5" width="21.7" height="21.5" fill="#0d56a6"/>
<path d="M1111.2 499 L1117.8 512.5 L1124.4 499 M1117.8 512 V521.5" fill="none" stroke="#fff" stroke-width="2.4"/>
<path d="M1112 503 L1117.8 514 L1123.6 503 M1117.8 513.5 V518" fill="none" stroke="#f04e0c" stroke-width="1.6"/>

</svg>
<div class="t" style="left:960px;width:62px;text-align:right;top:265.1px;font-size:13px;color:#333">1200</div>
<div class="t" style="left:960px;width:62px;text-align:right;top:329.3px;font-size:13px;color:#333">1000</div>
<div class="t" style="left:960px;width:62px;text-align:right;top:393.5px;font-size:13px;color:#333">800</div>
<div class="t" style="left:960px;width:62px;text-align:right;top:457.7px;font-size:13px;color:#333">600</div>
<div class="t" style="left:960px;width:62px;text-align:right;top:521.9px;font-size:13px;color:#333">400</div>
<div class="t" style="left:960px;width:62px;text-align:right;top:586.1px;font-size:13px;color:#333">200</div>
<div class="t" style="left:1018.1px;width:60px;text-align:center;top:653.5px;font-size:13px;color:#333">350</div>
<div class="t" style="left:1100.0px;width:60px;text-align:center;top:653.5px;font-size:13px;color:#333">400</div>
<div class="t" style="left:1181.9px;width:60px;text-align:center;top:653.5px;font-size:13px;color:#333">450</div>
<div class="t" style="left:1263.8px;width:60px;text-align:center;top:653.5px;font-size:13px;color:#333">500</div>
<div class="t" style="left:1129px;top:675px;font-size:18px;color:#222;letter-spacing:0.15px">Z Locations (mm)</div>
<div class="t" style="left:877px;top:447.5px;width:195px;text-align:center;font-size:17.9px;color:#222;transform:rotate(-90deg);transform-origin:97.5px 9px">Beam Widths - D4σ (µm)</div>

<!-- status bar -->
<div class="a" style="left:0;top:714px;width:1390px;height:24px;background:#f8f8f8;border-top:1px solid #e4e4e4"></div>
<div class="a" style="left:0;top:737px;width:1390px;height:2px;background:#0e2a4e"></div>
<div class="a" style="left:0;top:739px;width:1390px;height:6px;background:linear-gradient(90deg,#f2eea2 0%,#eaf0a8 40%,#e6f0b0 65%,#f8f0a0 85%,#f4f0b0 100%)"></div>


<!-- status content -->
<div class="t" style="left:9px;top:719.5px;font-size:13px;color:#222;letter-spacing:-0.1px">No Source Connected</div>
<svg style="left:145px;top:719px" width="15" height="14" viewBox="0 0 15 14"><path d="M7.5 0.8 L14.3 13.2 H0.7 Z" fill="#f5b800" stroke="#f5b800" stroke-width="1" stroke-linejoin="round"/><rect x="6.8" y="4.5" width="1.4" height="5" fill="#222"/><rect x="6.8" y="10.5" width="1.4" height="1.4" fill="#222"/></svg>
<!-- IME bar -->
<div class="a" style="left:1212px;top:714px;width:178px;height:25px;background:#fdfdfd;border-top:1px solid #d8e2ee"></div>
<svg style="left:1206px;top:710px" width="34" height="30" viewBox="0 0 34 30">
<g transform="rotate(-12 17 15)"><rect x="4" y="3" width="26" height="24" rx="3" fill="#f05518"/>
<path d="M24 9 C20 6 10 7 10 11 C10 15 24 14 24 19 C24 23 14 24 9 21" fill="none" stroke="#fff" stroke-width="3.4" stroke-linecap="round"/></g>
</svg>
<div class="t" style="left:1241px;top:719px;font-size:14px;font-weight:bold;color:#1462d4">中</div>
<svg style="left:1265px;top:720px" width="12" height="12" viewBox="0 0 12 12"><circle cx="2.5" cy="4" r="1.6" fill="none" stroke="#1462d4" stroke-width="1.2"/><path d="M9 6 Q10 9 7 11" fill="none" stroke="#1462d4" stroke-width="2"/></svg>
<svg style="left:1285px;top:718px" width="12" height="16" viewBox="0 0 12 16"><rect x="3.5" y="0.5" width="5" height="9.5" rx="2.5" fill="#1462d4"/><path d="M1 7 Q1 12.5 6 12.5 Q11 12.5 11 7 M6 12.5 V15 M3 15 H9" fill="none" stroke="#1462d4" stroke-width="1.3"/></svg>
<svg style="left:1307px;top:720px" width="14" height="12" viewBox="0 0 14 12"><rect x="0.7" y="0.7" width="12.6" height="10.6" rx="1.5" fill="none" stroke="#1462d4" stroke-width="1.4"/><g fill="#1462d4"><rect x="3" y="3" width="1.5" height="1.5"/><rect x="6" y="3" width="1.5" height="1.5"/><rect x="9" y="3" width="1.5" height="1.5"/><rect x="3" y="5.5" width="1.5" height="1.5"/><rect x="6" y="5.5" width="1.5" height="1.5"/><rect x="9" y="5.5" width="1.5" height="1.5"/><rect x="3.5" y="8" width="7" height="1.4"/></g></svg>
<svg style="left:1328px;top:716px" width="20" height="18" viewBox="0 0 20 18"><defs><linearGradient id="ts" x1="0" y1="0" x2="1" y2="1"><stop offset="0" stop-color="#f06a5a"/><stop offset="0.5" stop-color="#b060e0"/><stop offset="1" stop-color="#5a70f8"/></linearGradient></defs><path d="M1 6 L5 3 H11 L15 6 L13 9 L12 8 V16 H4 V8 L3 9 Z" fill="url(#ts)"/><circle cx="15" cy="3" r="2.5" fill="#f04a3a" stroke="#fff" stroke-width="1"/></svg>
<svg style="left:1352px;top:720px" width="12" height="12" viewBox="0 0 12 12"><g fill="#1462d4"><rect x="0" y="0" width="5" height="5" rx="1"/><rect x="7" y="0" width="5" height="5" rx="2.5"/><rect x="0" y="7" width="5" height="5" rx="1"/><rect x="7" y="7" width="5" height="5" rx="1"/></g></svg>
<svg style="left:1369px;top:716px" width="21" height="22" viewBox="0 0 21 22"><circle cx="11" cy="11" r="10" fill="#f4f0ee"/><path d="M3 9 L15 6 L18 9 L15 13 L5 14 Z" fill="#e8603a"/><circle cx="12" cy="10" r="1.3" fill="#222"/><path d="M19 2 L20 4 L21 2" fill="#f5d300"/></svg>

<!-- borders -->
<div class="a" style="left:0;top:0;width:1390px;height:1px;background:#0a1f3c"></div>
<div class="a" style="left:0;top:0;width:1px;height:739px;background:#0a1f3c"></div>
<div class="a" style="left:1388px;top:0;width:2px;height:739px;background:#0a1f3c"></div>
</body></html>
